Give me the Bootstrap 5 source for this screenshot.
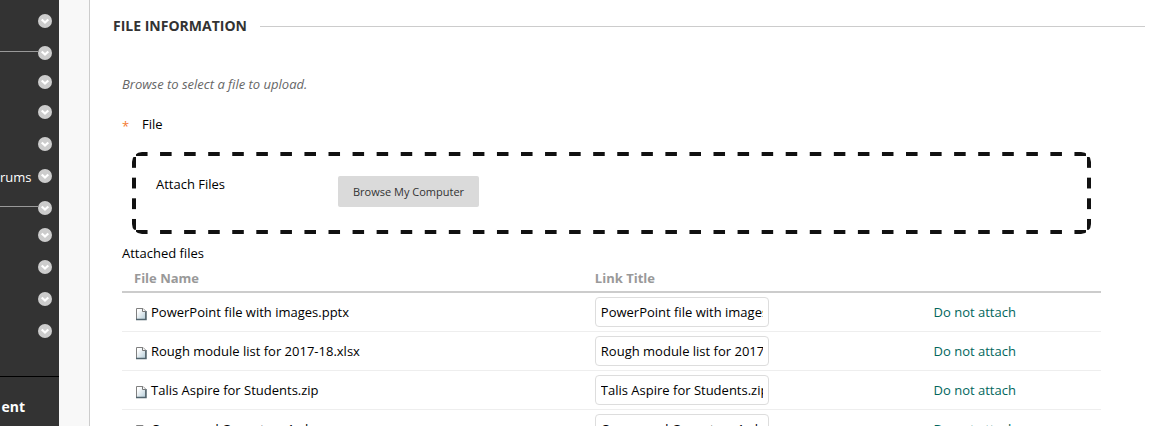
<!DOCTYPE html>
<html lang="en">
<head>
<meta charset="utf-8">
<meta name="viewport" content="width=device-width, initial-scale=1">
<title>File Information</title>
<link href="https://cdn.jsdelivr.net/npm/bootstrap@5.3.0/dist/css/bootstrap.min.css" rel="stylesheet">
<style>
  body { font-family: "Open Sans", "Noto Sans", sans-serif; font-size: 13px; line-height: 18px; color: #000; background: #f8f8f8; }
  .page { height: 100vh; }
  .side { width: 59px; background: #333; color: #fff; }
  .side ul { padding: 13px 7px 0 0; }
  .side li { height: 32px; }
  .side li.short { height: 29px; }
  .side li.snug { height: 27px; }
  .side li.mid { height: 30px; }
  .side li span { flex: 1; }
  .side li.rule > span { border-top: 1px solid #999; margin-top: 6px; }
  .side .opt { width: 14px; height: 14px; margin-top: 1px; }
  .side .opt svg { display: block; }
  .side .panel { border-top: 1px solid #000; margin-top: 21px; padding: 21px 34px 0 0; font-size: 14px; font-weight: 700; }
  .content { margin-left: 30px; border-left: 1px solid #ccc; background: #fff; padding: 17px 5px 0 23px; min-width: 0; }
  .heading { font-size: 14px; line-height: 18px; font-weight: 700; color: #333; }
  .heading-line { height: 1px; background: #ccc; margin-left: 13px; }
  .step { padding: 40px 44px 0 9px; }
  .hint { color: #666; font-style: italic; }
  .required-row { margin-top: 22px; }
  .star { width: 20px; height: 18px; line-height: 22px; color: #f47b30; }
  .drop {
    --dash-x: linear-gradient(90deg, #111 50%, transparent 0);
    --dash-y: linear-gradient(#111 50%, transparent 0);
    margin: 19px 10px 0; border-radius: 10px; padding: 24px; min-height: 82px;
    background-image: var(--dash-x), var(--dash-x), var(--dash-y), var(--dash-y);
    background-size: calc((100% - 20px) / 39) 4px, calc((100% - 20px) / 39) 4px, 4px calc((100% - 20px) / 3), 4px calc((100% - 20px) / 3);
    background-position: left 4px top 0, left 4px bottom 0, left 0 top 5px, right 0 top 5px;
    background-repeat: repeat-x, repeat-x, repeat-y, repeat-y;
  }
  .drop label { width: 182px; line-height: 16px; }
  .btn-browse { background: #dadada; color: #333; font-size: 11px; line-height: 15px; padding: 8px 15px; border: 0; border-radius: 2px; }
  .caption-line { margin-top: 10px; }
  .files { table-layout: fixed; }
  .files th { color: #999; padding: 0 12px 4px; line-height: 18px; height: 30px; vertical-align: bottom; border-bottom: 2px solid #ccc; }
  .files td { padding: 4px 12px; height: 39px; border-bottom: 1px solid #eee; vertical-align: middle; white-space: nowrap; }
  .files th:nth-child(n+2), .files td:nth-child(n+2) { padding-left: 0; }
  .files .doc-icon { width: 12px; height: 14px; margin: 0 3px 0 2px; }
  .c-name { width: 48.3%; }
  .c-title { width: 34.6%; }
  .files input { width: 174px; height: 30px; border: 1px solid #ddd; border-radius: 4px; padding: 0 5px; font-size: 13px; color: #000; display: block; }
  .files a { color: #01665c; }
</style>
</head>
<body>
<svg width="0" height="0" class="position-absolute" aria-hidden="true">
  <defs><linearGradient id="paper" x1="0" y1="0" x2="1" y2="1"><stop offset=".2" stop-color="#fff"/><stop offset="1" stop-color="#b4ccd8"/></linearGradient></defs>
  <symbol id="chev" viewBox="0 0 14 14">
    <circle cx="7" cy="7" r="7" fill="#ccc"/>
    <path d="M3.700 5.500 7 8.600l3.300-3.100" fill="none" stroke="#fff" stroke-width="2.200"/>
  </symbol>
  <symbol id="doc" viewBox="0 0 12 14">
    <path d="M.5 1.500h6.500l2.500 2.500v8.500h-9z" fill="url(#paper)" stroke="#808080"/>
    <path d="M10 4v8.500H0" fill="none" stroke="#52646e" stroke-width="1.500"/>
    <path d="M6.500 1.500v3h3" fill="#fff" stroke="#777"/>
  </symbol>
</svg>
<div class="page d-flex overflow-hidden">
  <nav class="side flex-shrink-0 overflow-hidden" aria-label="Course menu">
    <ul class="list-unstyled mb-0" id="menu"></ul>
    <div class="panel text-end">ent</div>
  </nav>
  <main class="content flex-grow-1">
    <div class="d-flex align-items-center">
      <h1 class="heading mb-0">FILE INFORMATION</h1><div class="heading-line flex-grow-1"></div>
    </div>
    <div class="step">
      <p class="hint mb-0">Browse to select a file to upload.</p>
      <div class="required-row d-flex"><span class="star">*</span><span>File</span></div>
      <div class="drop d-flex align-items-start">
        <label for="browse">Attach Files</label>
        <button id="browse" type="button" class="btn btn-browse">Browse My Computer</button>
      </div>
      <div class="caption-line">Attached files</div>
      <table class="files w-100">
        <thead><tr><th class="c-name">File Name</th><th class="c-title">Link Title</th><th></th></tr></thead>
        <tbody id="rows"></tbody>
      </table>
    </div>
  </main>
</div>
<script src="https://cdn.jsdelivr.net/npm/bootstrap@5.3.0/dist/js/bootstrap.bundle.min.js"></script>
<script>
  const items = [['', ''], ['short rule', ''], ['mid', ''], ['', ''], ['', ''], ['', 'rums'], ['snug rule', ''], ['', ''], ['', ''], ['', ''], ['', '']];
  document.getElementById('menu').innerHTML = items.map(([c, t]) =>
    `<li class="d-flex ${c}"><span>${t}</span><button type="button" class="opt btn p-0 border-0" aria-label="Options"><svg width="14" height="14"><use href="#chev"/></svg></button></li>`).join('');
  const files = ['PowerPoint file with images.pptx', 'Rough module list for 2017-18.xlsx', 'Talis Aspire for Students.zip', 'Compound Operators 1.xlsx'];
  document.getElementById('rows').innerHTML = files.map(f =>
    `<tr><td><svg class="doc-icon"><use href="#doc"/></svg>${f}</td><td><input type="text" aria-label="Link Title" value="${f}"></td><td><a href="#" class="text-decoration-none">Do not attach</a></td></tr>`).join('');
</script>
</body>
</html>
